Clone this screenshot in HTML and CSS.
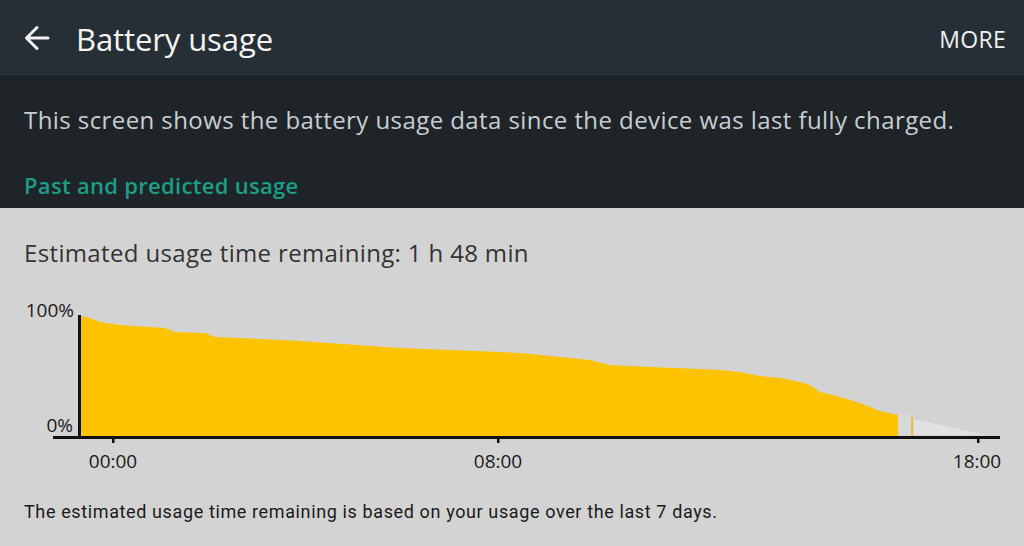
FILE: index.html
```html
<!DOCTYPE html>
<html>
<head>
<meta charset="utf-8">
<link rel="stylesheet" href="styles.css">
</head>
<body>
<header class="appbar">
  <svg class="back" width="28" height="28" viewBox="0 0 28 28"><path d="M25 14H4M14 3.5L3.5 14 14 24.5" fill="none" stroke="#f2f2f2" stroke-width="3" stroke-linecap="round" stroke-linejoin="round"/></svg>
  <h1 class="title">Battery usage</h1>
  <span class="more">MORE</span>
</header>
<section class="intro">
  <p class="desc">This screen shows the battery usage data since the device was last fully charged.</p>
  <h2 class="sub">Past and predicted usage</h2>
</section>
<section class="panel">
  <p class="estimate">Estimated usage time remaining: 1 h 48 min</p>
  <svg class="chart" width="1024" height="180" viewBox="0 295 1024 180">
    <polygon fill="#fdc300" points="81,316 90,318 100,322 120,325 165,328 175,332 205,333 215,337 260,339 300,341 400,348 500,352 520,353 560,357 590,360 610,365 650,367 700,369 720,370 740,372 760,376 780,378 800,382 810,385 820,392 840,397 860,403 880,411 898,415 898,436 81,436"/>
    <rect x="898" y="414" width="14" height="22" fill="#d8d8d8"/>
    <rect x="911" y="417" width="2" height="19" fill="#e8c23a"/>
    <polygon fill="#e1e1e1" points="914,419 985,435 914,435"/>
    <rect x="78" y="315" width="3" height="124" fill="#111"/>
    <rect x="53" y="436" width="947" height="3" fill="#111"/>
    <rect x="112" y="438" width="2.5" height="5" fill="#111"/>
    <rect x="497" y="438" width="2.5" height="5" fill="#111"/>
    <rect x="977" y="438" width="2.5" height="5" fill="#111"/>
    <text class="lbl" x="74" y="317" text-anchor="end">100%</text>
    <text class="lbl" x="73" y="432" text-anchor="end">0%</text>
    <text class="lbl" x="113" y="468" text-anchor="middle">00:00</text>
    <text class="lbl" x="498" y="468" text-anchor="middle">08:00</text>
    <text class="lbl" x="977" y="468" text-anchor="middle">18:00</text>
  </svg>
  <p class="note">The estimated usage time remaining is based on your usage over the last 7 days.</p>
</section>
</body>
</html>
```
FILE: styles.css
```css
* { box-sizing: border-box; }
html, body { margin: 0; padding: 0; }
body {
  width: 1024px;
  height: 546px;
  overflow: hidden;
  background: #d3d3d3;
  font-family: "Open Sans", "Noto Sans", sans-serif;
}
.appbar {
  height: 75px;
  background: #262f36;
  display: flex;
  align-items: center;
  padding: 4px 18px 0 23px;
  border-bottom: 1px solid #2c353c;
}
.back { flex: none; margin-top: -2px; }
.title {
  margin: 0 0 0 25px;
  font-size: 31px;
  font-weight: 400;
  color: #f4f4f4;
  flex: 1;
  letter-spacing: -0.1px;
}
.more {
  font-size: 23px;
  color: #f2f2f2;
  letter-spacing: 0.3px;
}
.intro {
  height: 133px;
  background: #1f2429;
  padding: 0 24px;
  overflow: hidden;
}
.desc {
  margin: 0;
  padding-top: 29px;
  font-size: 24px;
  line-height: 32px;
  color: #c9ced2;
  letter-spacing: 0.42px;
}
.sub {
  margin: 34px 0 0;
  font-size: 22px;
  line-height: 30px;
  font-weight: 600;
  color: #1b9e86;
  letter-spacing: 0.3px;
}
.panel {
  position: relative;
  height: 338px;
}
.estimate {
  margin: 0;
  padding: 29px 24px 0;
  font-size: 24px;
  line-height: 32px;
  color: #333;
  letter-spacing: 0.35px;
}
.chart {
  display: block;
  margin-top: 26px;
}
.lbl {
  font-family: "Open Sans", "Noto Sans", sans-serif;
  font-size: 19px;
  fill: #1a1a1a;
}
.note {
  margin: 25px 0 0;
  padding: 0 24px;
  font-family: "Roboto", "Noto Sans", sans-serif;
  font-size: 18px;
  line-height: 24px;
  color: #1a1a1a;
  letter-spacing: 0.62px;
}
```
